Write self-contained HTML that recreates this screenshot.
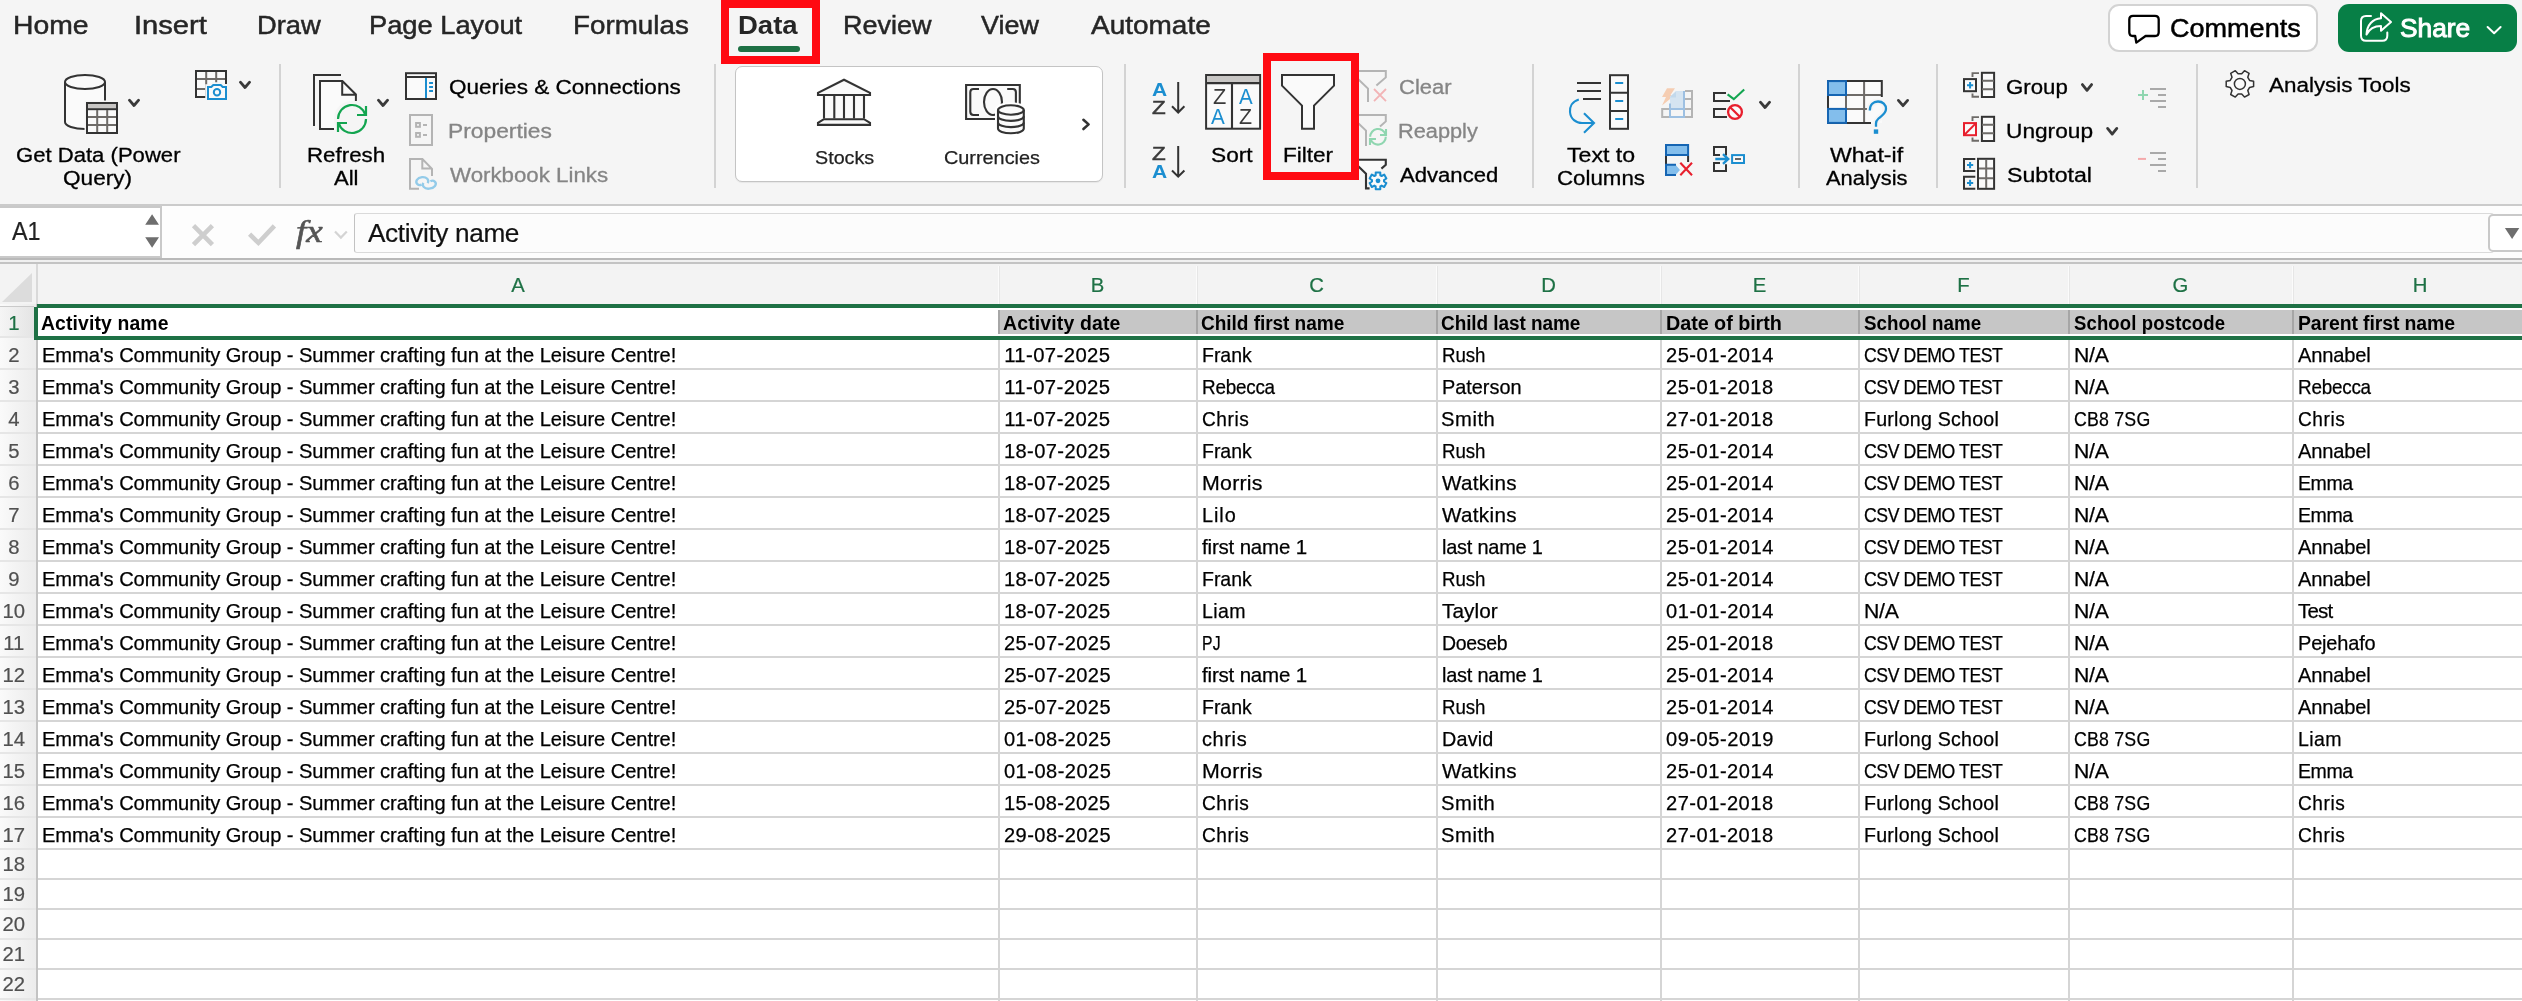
<!DOCTYPE html>
<html lang="en"><head><meta charset="utf-8"><title>Excel - Data tab Filter</title>
<style>
html,body{margin:0;padding:0}
body{width:2522px;height:1001px;position:relative;overflow:hidden;background:#fff;font-family:"Liberation Sans",sans-serif;color:#000}
.t{position:absolute;white-space:pre;margin:0;padding:0;transform-origin:0 0}
.abs{position:absolute}
#ribbon{position:absolute;left:0;top:0;width:2522px;height:204px;background:#f5f5f5}
.sep{position:absolute;top:64px;height:124px;width:2px;background:#d3d3d3}
.redbox{position:absolute;box-sizing:border-box;border:8px solid #ff0a12}
#gallery{position:absolute;left:735px;top:66px;width:368px;height:116px;box-sizing:border-box;border:1.5px solid #c4c4c4;border-radius:7px;background:#fff;box-shadow:0 1px 1px rgba(0,0,0,0.06)}
#comments{position:absolute;left:2108px;top:4px;width:210px;height:47.5px;box-sizing:border-box;border:2px solid #d3d3d3;border-radius:11px;background:#fff}
#share{position:absolute;left:2338px;top:4px;width:178.5px;height:48px;border-radius:11px;background:#077f46}
#fbar{position:absolute;left:0;top:204px;width:2522px;height:60px;background:#fdfdfd}
#grid{position:absolute;left:0;top:264px;width:2522px;height:737px;background:#fff}
.hl{position:absolute;left:38px;width:2484px;height:2px;background:#d5d5d5}
.vl{position:absolute;top:340px;width:2px;height:661px;background:#d5d5d5}
#app{position:absolute;left:0;top:0;width:2522px;height:1001px;overflow:hidden;will-change:transform}
</style></head><body><div id="app">
<div id="ribbon">
<div class="sep" style="left:278.6px"></div>
<div class="sep" style="left:714.4px"></div>
<div class="sep" style="left:1124.2px"></div>
<div class="sep" style="left:1531.8px"></div>
<div class="sep" style="left:1798.3px"></div>
<div class="sep" style="left:1935.8px"></div>
<div class="sep" style="left:2196.0px"></div>
<div id="gallery"></div><div id="comments"></div><div id="share"></div>
<div class="abs" style="left:738.2px;top:46px;width:62px;height:6px;border-radius:3px;background:#1e7145"></div>
<svg class="abs" style="left:0;top:0" width="2522" height="204" viewBox="0 0 2522 204"><path d="M65 82 A20 7 0 0 1 105 82 V122 A20 7 0 0 1 65 122 Z" fill="#fafafa"/>
<g fill="none" stroke="#333333" stroke-width="2"><ellipse cx="85" cy="82" rx="20" ry="7"/><path d="M65 82 V122 A20 7 0 0 0 85 129"/><path d="M105 82 V101"/></g>
<rect x="84.5" y="100.5" width="35" height="35" fill="#f5f5f5"/>
<rect x="87" y="103" width="30" height="30" fill="#fafafa" stroke="#333333" stroke-width="2"/>
<rect x="88" y="104" width="28" height="4.3" fill="#c8c6c4"/>
<path d="M87 109.2 H117" stroke="#333333" stroke-width="2"/>
<path d="M97.2 110 V132 M107.2 110 V132 M88 117.1 H116 M88 125 H116" stroke="#6e6b68" stroke-width="2" fill="none"/>
<path d="M129.4 100.2 L134.0 105.5 L138.6 100.2" fill="none" stroke="#3a3a3a" stroke-width="2.8" stroke-linecap="round" stroke-linejoin="round"/>
<rect x="196" y="71" width="30" height="26" fill="#fafafa"/>
<path d="M206.2 72 V96 M216.2 72 V84 M197 79 H225 M197 89 H206" stroke="#6e6b68" stroke-width="2" fill="none"/>
<path d="M226 84 V71 H196 V97 H206" stroke="#333333" stroke-width="2" fill="none"/>
<path d="M208 87 H211.3 L213.3 85 H220.7 L222.7 87 H226 V99 H208 Z" fill="#f5f5f5" stroke="#f5f5f5" stroke-width="5.5"/>
<path d="M208 87 H211.3 L213.3 85 H220.7 L222.7 87 H226 V99 H208 Z" fill="#fafafa" stroke="#1b8ed0" stroke-width="2"/>
<circle cx="217" cy="92.2" r="3.2" fill="none" stroke="#1b8ed0" stroke-width="2"/>
<path d="M240.4 82.2 L245.0 87.5 L249.6 82.2" fill="none" stroke="#3a3a3a" stroke-width="2.8" stroke-linecap="round" stroke-linejoin="round"/>
<path d="M341 75 H314 V126" stroke="#333333" stroke-width="2" fill="none"/>
<path d="M320 81 H342.5 L356 94.5 V129 H320 Z" fill="#fafafa"/>
<path d="M334 129 H320 V81 H342.4 L355.9 94.5 V101 M342.2 81 V94.8 H356" stroke="#333333" stroke-width="2" fill="none"/>
<circle cx="352" cy="119" r="18" fill="#f5f5f5"/>
<g fill="none" stroke="#13a550" stroke-width="2.2"><path d="M338 119 A14 14 0 0 1 365.39 114.91"/><path d="M357 115 H366 V106"/><path d="M366 119 A14 14 0 0 1 338.61 123.09"/><path d="M347 123 H338 V132"/></g>
<path d="M378.4 100.2 L383.0 105.5 L387.6 100.2" fill="none" stroke="#3a3a3a" stroke-width="2.8" stroke-linecap="round" stroke-linejoin="round"/>
<rect x="406" y="73.2" width="30" height="25.8" fill="#fafafa" stroke="#333333" stroke-width="2"/>
<path d="M406 77 H436" stroke="#333333" stroke-width="2"/>
<path d="M426 78 V98 M429.1 83 H433 M429.1 87 H433 M429.1 91 H433" stroke="#1b8ed0" stroke-width="2" fill="none"/>
<g fill="none" stroke="#b4b4b4" stroke-width="2"><rect x="410" y="115" width="22" height="30"/><rect x="416.1" y="123" width="3.8" height="3.8"/><rect x="416.1" y="133" width="3.8" height="3.8"/><path d="M423 125 H427 M423 134.9 H427"/></g>
<path d="M419 188.8 H410 V159.1 H422.4 L432 168.8 V176 M422.3 159.1 V168.6 H432" fill="none" stroke="#b4b4b4" stroke-width="2"/>
<g fill="none" stroke="#93cbe9" stroke-width="2.3"><path d="M427.6 183.2 C429.6 180.2 426.6 176.6 422 177.1 C417.2 177.6 414.8 181.6 417.4 184.2 C418.6 185.3 420.4 185.2 421.6 184.6"/><path d="M423.4 182.8 C421.6 185.8 424.4 189.2 429.2 188.7 C434.6 188.2 437.4 184.2 434.8 181.6 C433.6 180.5 431.6 180.6 430.4 181.2"/></g>
<rect x="824" y="95" width="40" height="24" fill="#fafafa"/>
<g fill="#fafafa" stroke="#333333" stroke-width="2.1"><path d="M818 95 V92.8 L844 79.7 L870 92.8 V95 Z"/><path d="M824 119.2 L818 122.8 V124.9 H870 V122.8 L864 119.2 Z"/></g>
<path d="M824 96 V118.5 M834.3 96 V118.5 M844 96 V118.5 M854 96 V118.5 M864 96 V118.5" stroke="#333333" stroke-width="2.1" fill="none"/>
<rect x="966.1" y="85" width="53.7" height="34" fill="#fafafa"/>
<g fill="none" stroke="#333333" stroke-width="2.1"><path d="M1019.8 104 V85 H966.1 V119 H996"/><path d="M979 89 H973.5 Q970.3 89 970.3 92.2 V111.8 Q970.3 115 973.5 115 H979"/><path d="M1007.2 89 H1012.7 Q1015.9 89 1015.9 92.2 V103"/><ellipse cx="993" cy="102" rx="9" ry="13"/></g>
<path d="M998 110 A12.9 4.7 0 0 1 1023.8 110 V128.6 A12.9 4.7 0 0 1 998 128.6 Z" fill="#fff" stroke="#fff" stroke-width="6"/>
<path d="M998 110 A12.9 4.7 0 0 1 1023.8 110 V128.6 A12.9 4.7 0 0 1 998 128.6 Z" fill="#fafafa" stroke="#333333" stroke-width="2.1"/>
<g fill="none" stroke="#333333" stroke-width="2.1"><path d="M998 110 A12.9 4.7 0 0 0 1023.8 110"/><path d="M998 116.2 A12.9 4.7 0 0 0 1023.8 116.2"/><path d="M998 122.4 A12.9 4.7 0 0 0 1023.8 122.4"/></g>
<path d="M1083.4 119.8 L1088.6 124.4 L1083.4 129" fill="none" stroke="#333333" stroke-width="2.6" stroke-linecap="round" stroke-linejoin="round"/>
<path d="M1178.2 82 V112.3 M1172 106.3 L1178.2 112.5 L1184.4 106.3" fill="none" stroke="#333333" stroke-width="2"/>
<path d="M1178.2 146 V176.5 M1172 170.5 L1178.2 176.7 L1184.4 170.5" fill="none" stroke="#333333" stroke-width="2"/>
<rect x="1206.1" y="75" width="54" height="53.7" fill="#fafafa" stroke="#333333" stroke-width="2"/>
<rect x="1207.1" y="76" width="52" height="6.2" fill="#c8c6c4"/>
<path d="M1206 83.1 H1260 M1232 84 V128.5" stroke="#333333" stroke-width="2.1" fill="none"/>
<path d="M1282 75 H1334 V85.6 L1314 105.6 V128.7 H1302 V105.6 L1282 85.6 Z" fill="#fafafa" stroke="#333333" stroke-width="2"/>
<g fill="none" stroke="#b4b4b4" stroke-width="2"><path d="M1356 71 H1385.8 V77.4 L1376.4 85.6"/><path d="M1358 79 L1368 88.6 V102"/></g>
<path d="M1374 89 L1386 101.2 M1386 89 L1374 101.2" stroke="#f2b4b6" stroke-width="1.8" fill="none"/>
<g fill="none" stroke="#b4b4b4" stroke-width="2"><path d="M1356 115 H1385.8 V121.4 L1380 126.5"/><path d="M1358 123 L1366 130.6 V146"/></g>
<g fill="none" stroke="#8fd6b0" stroke-width="2.1"><path d="M1370.2 136.8 A7.8 7.8 0 0 1 1385.46 134.52"/><path d="M1380 135 H1386 V129"/><path d="M1385.8 136.8 A7.8 7.8 0 0 1 1370.54 139.08"/><path d="M1376 139 H1370 V145"/></g>
<path d="M1356 159.7 H1385.8 V165 L1376 173 L1366 173.6 L1357 165.5 Z" fill="#fafafa"/>
<g fill="none" stroke="#333333" stroke-width="2.1"><path d="M1356 159.7 H1385.8 V164.8 L1381.4 168.6"/><path d="M1357.5 165.6 L1366 173.8 V188.4 H1369.6"/></g>
<circle cx="1378" cy="180.8" r="10.5" fill="#f5f5f5"/>
<polygon points="1375.7,172.4 1380.3,172.4 1380.3,175.3 1381.6,176.0 1384.2,174.6 1386.4,178.5 1384.0,180.1 1384.0,181.5 1386.4,183.1 1384.2,187.0 1381.6,185.6 1380.3,186.3 1380.3,189.2 1375.7,189.2 1375.7,186.3 1374.4,185.6 1371.8,187.0 1369.6,183.1 1372.0,181.5 1372.0,180.1 1369.6,178.5 1371.8,174.6 1374.4,176.0 1375.7,175.3" fill="#fafafa" stroke="#1b8ed0" stroke-width="2" stroke-linejoin="round"/>
<circle cx="1378" cy="180.8" r="2.4" fill="#1b8ed0"/>
<path d="M1577 83 H1601 M1577 91 H1601 M1583 99 H1601" stroke="#333333" stroke-width="2" fill="none"/>
<path d="M1578.8 99.4 C1572 101.5 1569.6 107 1570 112 C1570.6 119 1576 123 1582 123 H1593.5 M1584 113.2 L1594 123 L1584 132.8" fill="none" stroke="#1b8ed0" stroke-width="2.1"/>
<rect x="1610" y="75.2" width="18" height="53.6" fill="#fafafa" stroke="#333333" stroke-width="2"/>
<path d="M1610 92.8 H1628 M1610 111 H1628" stroke="#333333" stroke-width="2"/>
<path d="M1615.2 83 H1623.2 M1615.2 101 H1623.2 M1615.2 119 H1623.2" stroke="#1b8ed0" stroke-width="2"/>
<path d="M1667 88.3 H1675 L1670.5 95 H1675 L1662 105.5 L1666 97 H1662 Z" fill="#f5cdb2"/>
<path d="M1684 91 H1676 L1670 96.5 L1670 109 H1684 Z" fill="#d5e4f1"/>
<path d="M1676 97.5 V91.5 L1669.5 97.5 Z" fill="#c3d9ec"/>
<g fill="none" stroke="#b4b4b4" stroke-width="2"><path d="M1685 91 H1692 V117 H1685 M1669 117 H1662.2 V109 H1669 M1685 99 H1692 M1685 109 H1692"/></g>
<g fill="none" stroke="#9dc0e2" stroke-width="2"><path d="M1670 103.5 V117 M1684 91 V117 M1669 117 H1685 M1669 109 H1685"/></g>
<g fill="none" stroke="#333333" stroke-width="2"><path d="M1726 93 H1714 V101 H1730"/><path d="M1726 109 H1714 V117 H1727"/></g>
<path d="M1727.6 94.4 L1733.8 99.2 L1744.2 89.4" fill="none" stroke="#13a550" stroke-width="2.1"/>
<circle cx="1735" cy="112" r="9" fill="#f5f5f5"/>
<circle cx="1735" cy="112" r="6.9" fill="#fafafa" stroke="#e81f2d" stroke-width="2.3"/><path d="M1730.2 107.2 L1739.8 116.8" stroke="#e81f2d" stroke-width="2.3"/>
<path d="M1760.4 102.2 L1765.0 107.5 L1769.6 102.2" fill="none" stroke="#3a3a3a" stroke-width="2.8" stroke-linecap="round" stroke-linejoin="round"/>
<rect x="1666" y="145" width="22.1" height="10" fill="#83beec" stroke="#1565b3" stroke-width="2"/>
<path d="M1666 156 V164 M1688.1 156 V162" stroke="#333333" stroke-width="2"/>
<path d="M1666 164.8 H1675.5 L1680 170 L1675.5 175 H1666 Z" fill="#83beec"/>
<path d="M1676 164.8 H1666 V175 H1676" fill="none" stroke="#1565b3" stroke-width="2"/>
<path d="M1680.3 162.8 L1692 175.2 M1692 162.8 L1680.3 175.2" stroke="#e81f2d" stroke-width="2.1" fill="none"/>
<g fill="none" stroke="#333333" stroke-width="2"><path d="M1720 155 H1714 V147 H1726 V155.5"/><path d="M1720 163 H1714 V171 H1726 V164.2"/></g>
<path d="M1715.3 159 H1727.5 M1723 154.2 L1728.2 159 L1723 163.8" fill="none" stroke="#1b8ed0" stroke-width="2.4"/>
<rect x="1732.1" y="155.1" width="11.9" height="7.9" fill="#fafafa" stroke="#1b8ed0" stroke-width="2"/>
<path d="M1735 159 H1741" stroke="#666" stroke-width="2"/>
<rect x="1828" y="81" width="54" height="42" fill="#fafafa"/>
<path d="M1846 82 V122 M1864.1 82 V122 M1829 95 H1881 M1829 108.9 H1872" stroke="#6e6b68" stroke-width="2" fill="none"/>
<path d="M1881.8 97 V81.1 H1828 V122.9 H1871" fill="none" stroke="#333333" stroke-width="2"/>
<rect x="1828" y="81.1" width="18" height="13.9" fill="#83beec" stroke="#1565b3" stroke-width="2"/>
<rect x="1828" y="108.9" width="18" height="14" fill="#83beec" stroke="#1565b3" stroke-width="2"/>
<path d="M1869.8 110.5 C1869.8 104.5 1873.5 101.5 1878 101.5 C1882.8 101.5 1886 104.8 1886 109 C1886 113.5 1882 115.5 1878.5 118.5 C1876.6 120.2 1876 121.5 1876 123.5 V126.8" fill="none" stroke="#f5f5f5" stroke-width="6"/>
<path d="M1869.8 110.5 C1869.8 104.5 1873.5 101.5 1878 101.5 C1882.8 101.5 1886 104.8 1886 109 C1886 113.5 1882 115.5 1878.5 118.5 C1876.6 120.2 1876 121.5 1876 123.5 V126.8" fill="none" stroke="#1b8ed0" stroke-width="2.3"/>
<rect x="1873.8" y="129.4" width="4.4" height="4.4" fill="#1b8ed0"/>
<path d="M1898.4 100.4 L1903.0 105.7 L1907.6 100.4" fill="none" stroke="#3a3a3a" stroke-width="2.8" stroke-linecap="round" stroke-linejoin="round"/>
<rect x="1981.9" y="72.8" width="12.2" height="24.2" fill="#fafafa" stroke="#333333" stroke-width="2"/>
<path d="M1982 80.7 H1994 M1982 89.3 H1994" stroke="#6e6b68" stroke-width="2"/>
<path d="M1972.5 77 V73.1 H1979 M1972.5 93.4 V96.8 H1979" fill="none" stroke="#6e6b68" stroke-width="1.9"/>
<rect x="1964" y="79.1" width="12" height="12.1" fill="#fafafa" stroke="#333333" stroke-width="2"/>
<path d="M1967 85.2 H1973.2 M1970.1 82 V88.4" stroke="#1b8ed0" stroke-width="2"/>
<rect x="1981.9" y="116.8" width="12.2" height="24.2" fill="#fafafa" stroke="#333333" stroke-width="2"/>
<path d="M1982 124.7 H1994 M1982 133.3 H1994" stroke="#6e6b68" stroke-width="2"/>
<path d="M1972.5 121 V117.1 H1979 M1972.5 137.4 V140.8 H1979" fill="none" stroke="#6e6b68" stroke-width="1.9"/>
<rect x="1964" y="123.1" width="12" height="12.1" fill="#fafafa" stroke="#e81f2d" stroke-width="2"/>
<path d="M1964.5 134.7 L1975.5 123.6" stroke="#e81f2d" stroke-width="2"/>
<path d="M2082.4 84.60000000000001 L2087.0 90.3 L2091.6 84.60000000000001" fill="none" stroke="#3a3a3a" stroke-width="2.8" stroke-linecap="round" stroke-linejoin="round"/>
<path d="M2107.6 128.4 L2112.2 134.1 L2116.7999999999997 128.4" fill="none" stroke="#3a3a3a" stroke-width="2.8" stroke-linecap="round" stroke-linejoin="round"/>
<rect x="1978" y="158.8" width="16.1" height="30" fill="#fafafa" stroke="#333333" stroke-width="2"/>
<path d="M1986.2 160 V188 M1979 168.6 H1993 M1979 178.2 H1993" stroke="#6e6b68" stroke-width="2" fill="none"/>
<path d="M1975.3 159 H1964 V170.9 H1975.3" fill="none" stroke="#333333" stroke-width="2"/>
<path d="M1967 165.1 H1973.2 M1970.1 161.9 V168.3" stroke="#1b8ed0" stroke-width="2"/>
<path d="M1975.3 176.8 H1964 V188.70000000000002 H1975.3" fill="none" stroke="#333333" stroke-width="2"/>
<path d="M1967 182.9 H1973.2 M1970.1 179.70000000000002 V186.10000000000002" stroke="#1b8ed0" stroke-width="2"/>
<path d="M2150 89 H2166 M2158 95 H2166 M2150 101 H2166 M2158 107 H2166" stroke="#a9a9a9" stroke-width="2"/>
<path d="M2150 152.9 H2166 M2158 158.9 H2166 M2150 164.9 H2166 M2158 170.9 H2166" stroke="#a9a9a9" stroke-width="2"/>
<path d="M2138 95 H2148 M2143 90 V100" stroke="#8fd6b0" stroke-width="2"/>
<path d="M2138 158.9 H2146" stroke="#f4a9ab" stroke-width="2"/>
<polygon points="2253.6,81.2 2253.6,86.6 2249.6,87.4 2247.8,90.5 2249.1,94.5 2244.5,97.1 2241.7,94.0 2238.1,94.0 2235.3,97.1 2230.7,94.5 2232.0,90.5 2230.2,87.4 2226.2,86.6 2226.2,81.2 2230.2,80.4 2232.0,77.3 2230.7,73.3 2235.3,70.7 2238.1,73.8 2241.7,73.8 2244.5,70.7 2249.1,73.3 2247.8,77.3 2249.6,80.4" fill="#fafafa" stroke="#333333" stroke-width="1.5" stroke-linejoin="round"/>
<circle cx="2239.9" cy="83.9" r="5.5" fill="#fafafa" stroke="#333333" stroke-width="1.5"/>
<path d="M2133 15.8 H2155 Q2158.7 15.8 2158.7 19.5 V32.3 Q2158.7 36 2155 36 H2145.6 L2136.3 42.6 L2135.2 36 H2133 Q2129.3 36 2129.3 32.3 V19.5 Q2129.3 15.8 2133 15.8 Z" fill="none" stroke="#000" stroke-width="2.3" stroke-linejoin="round"/>
<g fill="none" stroke="#fff" stroke-width="2" stroke-linejoin="round" stroke-linecap="round"><path d="M2371 16 H2366 Q2361 16 2361 21 V35.8 Q2361 40.8 2366 40.8 H2382.3 Q2387.3 40.8 2387.3 35.8 V32.5"/><path d="M2381 13.2 L2391 22 L2381 30.8 V26 C2374 26 2369.5 28.5 2366.5 34.5 C2367 25 2372.5 18.8 2381 18.2 Z"/><path d="M2487.6 27 L2494.1 33.2 L2500.6 27"/></g></svg>
<span class="t" style="left:12.68px;top:8.90px;font-size:26.7px;line-height:33px;transform:scaleX(1.0613);color:#262626;-webkit-text-stroke:0.5px #262626;">Home</span>
<span class="t" style="left:134.31px;top:8.90px;font-size:26.7px;line-height:33px;transform:scaleX(1.0919);color:#262626;-webkit-text-stroke:0.5px #262626;">Insert</span>
<span class="t" style="left:257.16px;top:8.90px;font-size:26.7px;line-height:33px;transform:scaleX(1.0236);color:#262626;-webkit-text-stroke:0.5px #262626;">Draw</span>
<span class="t" style="left:369.36px;top:8.90px;font-size:26.7px;line-height:33px;transform:scaleX(1.0221);color:#262626;-webkit-text-stroke:0.5px #262626;">Page Layout</span>
<span class="t" style="left:573.12px;top:8.90px;font-size:26.7px;line-height:33px;transform:scaleX(1.0415);color:#262626;-webkit-text-stroke:0.5px #262626;">Formulas</span>
<span class="t" style="left:737.96px;top:8.90px;font-size:26.7px;line-height:33px;transform:scaleX(1.0311);font-weight:700;color:#262626;">Data</span>
<span class="t" style="left:843.08px;top:8.90px;font-size:26.7px;line-height:33px;transform:scaleX(1.0115);color:#262626;-webkit-text-stroke:0.5px #262626;">Review</span>
<span class="t" style="left:981.48px;top:8.90px;font-size:26.7px;line-height:33px;transform:scaleX(1.0081);color:#262626;-webkit-text-stroke:0.5px #262626;">View</span>
<span class="t" style="left:1090.95px;top:8.90px;font-size:26.7px;line-height:33px;transform:scaleX(1.0483);color:#262626;-webkit-text-stroke:0.5px #262626;">Automate</span>
<span class="t" style="left:2170.23px;top:12.20px;font-size:26.7px;line-height:33px;transform:scaleX(1.0130);-webkit-text-stroke:0.5px #000;">Comments</span>
<span class="t" style="left:2400.01px;top:12.20px;font-size:26.7px;line-height:33px;transform:scaleX(0.9848);color:#fff;-webkit-text-stroke:1.0px #fff;">Share</span>
<span class="t" style="left:15.89px;top:142.60px;font-size:20px;line-height:24px;transform:scaleX(1.1043);-webkit-text-stroke:0.3px #000;">Get Data (Power</span>
<span class="t" style="left:63.33px;top:166.00px;font-size:20px;line-height:24px;transform:scaleX(1.1301);-webkit-text-stroke:0.3px #000;">Query)</span>
<span class="t" style="left:306.77px;top:142.60px;font-size:20px;line-height:24px;transform:scaleX(1.1150);-webkit-text-stroke:0.3px #000;">Refresh</span>
<span class="t" style="left:333.96px;top:166.00px;font-size:20px;line-height:24px;transform:scaleX(1.1031);-webkit-text-stroke:0.3px #000;">All</span>
<span class="t" style="left:448.53px;top:74.60px;font-size:20px;line-height:24px;transform:scaleX(1.1266);-webkit-text-stroke:0.3px #000;">Queries &amp; Connections</span>
<span class="t" style="left:448.43px;top:118.60px;font-size:20px;line-height:24px;transform:scaleX(1.1399);color:#858585;-webkit-text-stroke:0.3px #858585;">Properties</span>
<span class="t" style="left:450.20px;top:162.60px;font-size:20px;line-height:24px;transform:scaleX(1.1141);color:#858585;-webkit-text-stroke:0.3px #858585;">Workbook Links</span>
<span class="t" style="left:1210.77px;top:142.60px;font-size:20px;line-height:24px;transform:scaleX(1.1341);-webkit-text-stroke:0.3px #000;">Sort</span>
<span class="t" style="left:1282.55px;top:142.60px;font-size:20px;line-height:24px;transform:scaleX(1.1279);-webkit-text-stroke:0.3px #000;">Filter</span>
<span class="t" style="left:1398.68px;top:74.60px;font-size:20px;line-height:24px;transform:scaleX(1.1003);color:#858585;-webkit-text-stroke:0.3px #858585;">Clear</span>
<span class="t" style="left:1398.42px;top:118.60px;font-size:20px;line-height:24px;transform:scaleX(1.0879);color:#858585;-webkit-text-stroke:0.3px #858585;">Reapply</span>
<span class="t" style="left:1399.76px;top:162.60px;font-size:20px;line-height:24px;transform:scaleX(1.1047);-webkit-text-stroke:0.3px #000;">Advanced</span>
<span class="t" style="left:1566.88px;top:142.60px;font-size:20px;line-height:24px;transform:scaleX(1.1558);-webkit-text-stroke:0.3px #000;">Text to</span>
<span class="t" style="left:1556.87px;top:166.00px;font-size:20px;line-height:24px;transform:scaleX(1.1144);-webkit-text-stroke:0.3px #000;">Columns</span>
<span class="t" style="left:1829.90px;top:142.60px;font-size:20px;line-height:24px;transform:scaleX(1.1536);-webkit-text-stroke:0.3px #000;">What-if</span>
<span class="t" style="left:1826.36px;top:166.00px;font-size:20px;line-height:24px;transform:scaleX(1.0935);-webkit-text-stroke:0.3px #000;">Analysis</span>
<span class="t" style="left:2006.48px;top:74.60px;font-size:20px;line-height:24px;transform:scaleX(1.1110);-webkit-text-stroke:0.3px #000;">Group</span>
<span class="t" style="left:2005.85px;top:118.60px;font-size:20px;line-height:24px;transform:scaleX(1.1341);-webkit-text-stroke:0.3px #000;">Ungroup</span>
<span class="t" style="left:2006.55px;top:162.60px;font-size:20px;line-height:24px;transform:scaleX(1.1583);-webkit-text-stroke:0.3px #000;">Subtotal</span>
<span class="t" style="left:2268.56px;top:73.00px;font-size:20px;line-height:24px;transform:scaleX(1.1211);-webkit-text-stroke:0.3px #000;">Analysis Tools</span>
<span class="t" style="left:814.80px;top:146.30px;font-size:19px;line-height:23px;transform:scaleX(1.0384);color:#222;-webkit-text-stroke:0.25px #222;">Stocks</span>
<span class="t" style="left:944.49px;top:146.30px;font-size:19px;line-height:23px;transform:scaleX(1.0443);color:#222;-webkit-text-stroke:0.25px #222;">Currencies</span>
<span class="t" style="left:1152.38px;top:77.70px;font-size:18.5px;line-height:23px;transform:scaleX(1.1360);font-weight:700;color:#1b8ed0;">A</span>
<span class="t" style="left:1152.19px;top:95.90px;font-size:18.5px;line-height:23px;transform:scaleX(1.2137);color:#3a3a3a;-webkit-text-stroke:0.5px #3a3a3a;">Z</span>
<span class="t" style="left:1152.19px;top:141.60px;font-size:18.5px;line-height:23px;transform:scaleX(1.2137);color:#3a3a3a;-webkit-text-stroke:0.5px #3a3a3a;">Z</span>
<span class="t" style="left:1152.38px;top:159.90px;font-size:18.5px;line-height:23px;transform:scaleX(1.1360);font-weight:700;color:#1b8ed0;">A</span>
<span class="t" style="left:1212.71px;top:84.00px;font-size:21.5px;line-height:26px;transform:scaleX(1.0104);color:#3a3a3a;">Z</span>
<span class="t" style="left:1211.16px;top:103.80px;font-size:21.5px;line-height:26px;transform:scaleX(0.9609);color:#1b8ed0;">A</span>
<span class="t" style="left:1239.36px;top:84.00px;font-size:21.5px;line-height:26px;transform:scaleX(0.9539);color:#1b8ed0;">A</span>
<span class="t" style="left:1238.72px;top:103.80px;font-size:21.5px;line-height:26px;transform:scaleX(0.9934);color:#3a3a3a;">Z</span>
<div class="redbox" style="left:721px;top:-0.4px;width:99px;height:64.8px"></div>
<div class="redbox" style="left:1263px;top:53px;width:96px;height:127px"></div>
</div>
<div id="fbar"></div>
<div class="abs" style="left:0;top:204px;width:2522px;height:2px;background:#cbcbcb"></div>
<div class="abs" style="left:-2px;top:206px;width:164px;height:52px;box-sizing:border-box;background:#fff;border:2px solid #c9c9c9"></div>
<div class="abs" style="left:353.5px;top:213px;width:2140px;height:40px;box-sizing:border-box;border:1.5px solid #dadada;border-left-color:#c2c2c2;border-radius:3px;background:#fcfcfc"></div>
<div class="abs" style="left:2487.5px;top:214px;width:60px;height:38px;box-sizing:border-box;border:2px solid #c9c9c9;border-radius:5px;background:#fff"></div>
<div class="abs" style="left:0;top:258px;width:2522px;height:2px;background:#b9b9b9"></div>
<div class="abs" style="left:0;top:260px;width:2522px;height:2px;background:#f0f0f0"></div>
<div class="abs" style="left:0;top:262px;width:2522px;height:2px;background:#c3c3c3"></div>
<svg class="abs" style="left:0;top:204px" width="2522" height="60" viewBox="0 204 2522 60">
<path d="M145.2 224.8 L152.1 214.3 L159 224.8 Z M145.2 237.2 L152.1 247.7 L159 237.2 Z" fill="#6e6e6e"/>
<path d="M193.5 225.7 L212.4 244.6 M212.4 225.7 L193.5 244.6" stroke="#cecece" stroke-width="4.6" fill="none"/>
<path d="M249.6 234.2 L258.4 242.8 L274.4 225.8" stroke="#cecece" stroke-width="4.6" fill="none"/>
<path d="M335 231.6 L340.9 237.6 L346.8 231.6" stroke="#d4d4d4" stroke-width="2.2" fill="none"/>
<path d="M2504.9 228 L2519.3 228 L2512.1 239 Z" fill="#6e6e6e"/>
</svg>
<span class="t" style="left:11.95px;top:215.00px;font-size:26px;line-height:32px;transform:scaleX(0.8989);color:#222;-webkit-text-stroke:0.2px #222;">A1</span>
<span class="t" style="left:296.08px;top:213.00px;font-size:31px;line-height:38px;transform:scaleX(1.1974);color:#555;font-family:'Liberation Serif',serif;font-style:italic;-webkit-text-stroke:0.6px #555;">fx</span>
<span class="t" style="left:368.25px;top:217.00px;font-size:26px;line-height:32px;letter-spacing:-0.356px;transform:scaleX(1.0073);color:#111;-webkit-text-stroke:0.2px #111;">Activity name</span>
<div id="grid">
</div>
<div class="abs" style="left:0;top:264px;width:2522px;height:40px;background:#f3f3f3"></div>
<div class="abs" style="left:0;top:304px;width:36px;height:697px;background:linear-gradient(to right,#fafafa,#f4f4f4 40%,#ececec)"></div>
<div class="abs" style="left:0;top:307px;width:36px;height:30px;background:linear-gradient(to right,#f5f5f5,#e3e3e3)"></div>
<div class="abs" style="left:0;top:305.8px;width:34px;height:1.4px;background:#cacaca"></div>
<div class="abs" style="left:36px;top:264px;width:2px;height:40px;background:#d9d9d9"></div><div class="abs" style="left:36px;top:304px;width:2px;height:697px;background:#c3c3c3"></div>
<svg class="abs" style="left:0;top:264px" width="38" height="40" viewBox="0 0 38 40"><path d="M32 9 V38 H2 Z" fill="#dcdcdc"/></svg>
<span class="t" style="left:511.23px;top:272.90px;font-size:20.3px;line-height:25px;color:#1e7145;-webkit-text-stroke:0.2px #1e7145;">A</span>
<span class="t" style="left:1090.73px;top:272.90px;font-size:20.3px;line-height:25px;color:#1e7145;-webkit-text-stroke:0.2px #1e7145;">B</span>
<span class="t" style="left:1309.17px;top:272.90px;font-size:20.3px;line-height:25px;color:#1e7145;-webkit-text-stroke:0.2px #1e7145;">C</span>
<span class="t" style="left:1541.17px;top:272.90px;font-size:20.3px;line-height:25px;color:#1e7145;-webkit-text-stroke:0.2px #1e7145;">D</span>
<span class="t" style="left:1752.73px;top:272.90px;font-size:20.3px;line-height:25px;color:#1e7145;-webkit-text-stroke:0.2px #1e7145;">E</span>
<span class="t" style="left:1957.30px;top:272.90px;font-size:20.3px;line-height:25px;color:#1e7145;-webkit-text-stroke:0.2px #1e7145;">F</span>
<span class="t" style="left:2172.61px;top:272.90px;font-size:20.3px;line-height:25px;color:#1e7145;-webkit-text-stroke:0.2px #1e7145;">G</span>
<span class="t" style="left:2412.67px;top:272.90px;font-size:20.3px;line-height:25px;color:#1e7145;-webkit-text-stroke:0.2px #1e7145;">H</span>
<div class="abs" style="left:998px;top:266px;width:1.2px;height:38px;background:#fbfbfb"></div><div class="abs" style="left:999.2px;top:266px;width:0.8px;height:38px;background:#e6e6e6"></div>
<div class="abs" style="left:1196px;top:266px;width:1.2px;height:38px;background:#fbfbfb"></div><div class="abs" style="left:1197.2px;top:266px;width:0.8px;height:38px;background:#e6e6e6"></div>
<div class="abs" style="left:1436px;top:266px;width:1.2px;height:38px;background:#fbfbfb"></div><div class="abs" style="left:1437.2px;top:266px;width:0.8px;height:38px;background:#e6e6e6"></div>
<div class="abs" style="left:1660px;top:266px;width:1.2px;height:38px;background:#fbfbfb"></div><div class="abs" style="left:1661.2px;top:266px;width:0.8px;height:38px;background:#e6e6e6"></div>
<div class="abs" style="left:1858px;top:266px;width:1.2px;height:38px;background:#fbfbfb"></div><div class="abs" style="left:1859.2px;top:266px;width:0.8px;height:38px;background:#e6e6e6"></div>
<div class="abs" style="left:2068px;top:266px;width:1.2px;height:38px;background:#fbfbfb"></div><div class="abs" style="left:2069.2px;top:266px;width:0.8px;height:38px;background:#e6e6e6"></div>
<div class="abs" style="left:2292px;top:266px;width:1.2px;height:38px;background:#fbfbfb"></div><div class="abs" style="left:2293.2px;top:266px;width:0.8px;height:38px;background:#e6e6e6"></div>
<div class="hl" style="top:368px"></div>
<div class="hl" style="top:400px"></div>
<div class="hl" style="top:432px"></div>
<div class="hl" style="top:464px"></div>
<div class="hl" style="top:496px"></div>
<div class="hl" style="top:528px"></div>
<div class="hl" style="top:560px"></div>
<div class="hl" style="top:592px"></div>
<div class="hl" style="top:624px"></div>
<div class="hl" style="top:656px"></div>
<div class="hl" style="top:688px"></div>
<div class="hl" style="top:720px"></div>
<div class="hl" style="top:752px"></div>
<div class="hl" style="top:784px"></div>
<div class="hl" style="top:816px"></div>
<div class="hl" style="top:848px"></div>
<div class="hl" style="top:878px"></div>
<div class="hl" style="top:908px"></div>
<div class="hl" style="top:938px"></div>
<div class="hl" style="top:968px"></div>
<div class="hl" style="top:998px"></div>
<div class="vl" style="left:998px"></div>
<div class="vl" style="left:1196px"></div>
<div class="vl" style="left:1436px"></div>
<div class="vl" style="left:1660px"></div>
<div class="vl" style="left:1858px"></div>
<div class="vl" style="left:2068px"></div>
<div class="vl" style="left:2292px"></div>
<div class="abs" style="left:0;top:336px;width:36px;height:2px;background:#e6e6e6"></div>
<div class="abs" style="left:0;top:368px;width:36px;height:2px;background:#e6e6e6"></div>
<div class="abs" style="left:0;top:400px;width:36px;height:2px;background:#e6e6e6"></div>
<div class="abs" style="left:0;top:432px;width:36px;height:2px;background:#e6e6e6"></div>
<div class="abs" style="left:0;top:464px;width:36px;height:2px;background:#e6e6e6"></div>
<div class="abs" style="left:0;top:496px;width:36px;height:2px;background:#e6e6e6"></div>
<div class="abs" style="left:0;top:528px;width:36px;height:2px;background:#e6e6e6"></div>
<div class="abs" style="left:0;top:560px;width:36px;height:2px;background:#e6e6e6"></div>
<div class="abs" style="left:0;top:592px;width:36px;height:2px;background:#e6e6e6"></div>
<div class="abs" style="left:0;top:624px;width:36px;height:2px;background:#e6e6e6"></div>
<div class="abs" style="left:0;top:656px;width:36px;height:2px;background:#e6e6e6"></div>
<div class="abs" style="left:0;top:688px;width:36px;height:2px;background:#e6e6e6"></div>
<div class="abs" style="left:0;top:720px;width:36px;height:2px;background:#e6e6e6"></div>
<div class="abs" style="left:0;top:752px;width:36px;height:2px;background:#e6e6e6"></div>
<div class="abs" style="left:0;top:784px;width:36px;height:2px;background:#e6e6e6"></div>
<div class="abs" style="left:0;top:816px;width:36px;height:2px;background:#e6e6e6"></div>
<div class="abs" style="left:0;top:848px;width:36px;height:2px;background:#e6e6e6"></div>
<div class="abs" style="left:0;top:878px;width:36px;height:2px;background:#e6e6e6"></div>
<div class="abs" style="left:0;top:908px;width:36px;height:2px;background:#e6e6e6"></div>
<div class="abs" style="left:0;top:938px;width:36px;height:2px;background:#e6e6e6"></div>
<div class="abs" style="left:0;top:968px;width:36px;height:2px;background:#e6e6e6"></div>
<div class="abs" style="left:0;top:998px;width:36px;height:2px;background:#e6e6e6"></div>
<div class="abs" style="left:998px;top:310px;width:1524px;height:24px;background:#c6c6c6"></div>
<div class="abs" style="left:998px;top:310px;width:2px;height:24px;background:#a6a6a6"></div>
<div class="abs" style="left:1196px;top:310px;width:2px;height:24px;background:#a6a6a6"></div>
<div class="abs" style="left:1436px;top:310px;width:2px;height:24px;background:#a6a6a6"></div>
<div class="abs" style="left:1660px;top:310px;width:2px;height:24px;background:#a6a6a6"></div>
<div class="abs" style="left:1858px;top:310px;width:2px;height:24px;background:#a6a6a6"></div>
<div class="abs" style="left:2068px;top:310px;width:2px;height:24px;background:#a6a6a6"></div>
<div class="abs" style="left:2292px;top:310px;width:2px;height:24px;background:#a6a6a6"></div>
<div class="abs" style="left:37px;top:304px;width:2490px;height:4px;background:#1e7145"></div><div class="abs" style="left:34px;top:307.2px;width:4px;height:32.8px;background:#1e7145"></div><div class="abs" style="left:34px;top:336px;width:2490px;height:4px;background:#1e7145"></div>
<span class="t" style="left:8.16px;top:310.50px;font-size:20.3px;line-height:25px;color:#1e7145;-webkit-text-stroke:0.2px #1e7145;">1</span>
<span class="t" style="left:8.16px;top:342.50px;font-size:20.3px;line-height:25px;color:#505050;-webkit-text-stroke:0.2px #505050;">2</span>
<span class="t" style="left:8.16px;top:374.50px;font-size:20.3px;line-height:25px;color:#505050;-webkit-text-stroke:0.2px #505050;">3</span>
<span class="t" style="left:8.16px;top:406.50px;font-size:20.3px;line-height:25px;color:#505050;-webkit-text-stroke:0.2px #505050;">4</span>
<span class="t" style="left:8.16px;top:438.50px;font-size:20.3px;line-height:25px;color:#505050;-webkit-text-stroke:0.2px #505050;">5</span>
<span class="t" style="left:8.16px;top:470.50px;font-size:20.3px;line-height:25px;color:#505050;-webkit-text-stroke:0.2px #505050;">6</span>
<span class="t" style="left:8.16px;top:502.50px;font-size:20.3px;line-height:25px;color:#505050;-webkit-text-stroke:0.2px #505050;">7</span>
<span class="t" style="left:8.16px;top:534.50px;font-size:20.3px;line-height:25px;color:#505050;-webkit-text-stroke:0.2px #505050;">8</span>
<span class="t" style="left:8.16px;top:566.50px;font-size:20.3px;line-height:25px;color:#505050;-webkit-text-stroke:0.2px #505050;">9</span>
<span class="t" style="left:2.51px;top:598.50px;font-size:20.3px;line-height:25px;color:#505050;-webkit-text-stroke:0.2px #505050;">10</span>
<span class="t" style="left:3.26px;top:630.50px;font-size:20.3px;line-height:25px;color:#505050;-webkit-text-stroke:0.2px #505050;">11</span>
<span class="t" style="left:2.51px;top:662.50px;font-size:20.3px;line-height:25px;color:#505050;-webkit-text-stroke:0.2px #505050;">12</span>
<span class="t" style="left:2.51px;top:694.50px;font-size:20.3px;line-height:25px;color:#505050;-webkit-text-stroke:0.2px #505050;">13</span>
<span class="t" style="left:2.51px;top:726.50px;font-size:20.3px;line-height:25px;color:#505050;-webkit-text-stroke:0.2px #505050;">14</span>
<span class="t" style="left:2.51px;top:758.50px;font-size:20.3px;line-height:25px;color:#505050;-webkit-text-stroke:0.2px #505050;">15</span>
<span class="t" style="left:2.51px;top:790.50px;font-size:20.3px;line-height:25px;color:#505050;-webkit-text-stroke:0.2px #505050;">16</span>
<span class="t" style="left:2.51px;top:822.50px;font-size:20.3px;line-height:25px;color:#505050;-webkit-text-stroke:0.2px #505050;">17</span>
<span class="t" style="left:2.51px;top:851.50px;font-size:20.3px;line-height:25px;color:#505050;-webkit-text-stroke:0.2px #505050;">18</span>
<span class="t" style="left:2.51px;top:881.50px;font-size:20.3px;line-height:25px;color:#505050;-webkit-text-stroke:0.2px #505050;">19</span>
<span class="t" style="left:2.51px;top:911.50px;font-size:20.3px;line-height:25px;color:#505050;-webkit-text-stroke:0.2px #505050;">20</span>
<span class="t" style="left:2.51px;top:941.50px;font-size:20.3px;line-height:25px;color:#505050;-webkit-text-stroke:0.2px #505050;">21</span>
<span class="t" style="left:2.51px;top:971.50px;font-size:20.3px;line-height:25px;color:#505050;-webkit-text-stroke:0.2px #505050;">22</span>
<span class="t" style="left:41.36px;top:310.50px;font-size:20.3px;line-height:25px;letter-spacing:0.129px;transform:scaleX(0.9549);font-weight:700;">Activity name</span>
<span class="t" style="left:1003.36px;top:310.50px;font-size:20.3px;line-height:25px;letter-spacing:0.152px;transform:scaleX(0.9591);font-weight:700;">Activity date</span>
<span class="t" style="left:1201.47px;top:310.50px;font-size:20.3px;line-height:25px;letter-spacing:-0.060px;transform:scaleX(0.9403);font-weight:700;">Child first name</span>
<span class="t" style="left:1441.47px;top:310.50px;font-size:20.3px;line-height:25px;letter-spacing:-0.071px;transform:scaleX(0.9353);font-weight:700;">Child last name</span>
<span class="t" style="left:1665.72px;top:310.50px;font-size:20.3px;line-height:25px;letter-spacing:-0.056px;transform:scaleX(0.9757);font-weight:700;">Date of birth</span>
<span class="t" style="left:1863.67px;top:310.50px;font-size:20.3px;line-height:25px;letter-spacing:0.012px;transform:scaleX(0.9268);font-weight:700;">School name</span>
<span class="t" style="left:2073.67px;top:310.50px;font-size:20.3px;line-height:25px;letter-spacing:0.139px;transform:scaleX(0.9136);font-weight:700;">School postcode</span>
<span class="t" style="left:2297.73px;top:310.50px;font-size:20.3px;line-height:25px;letter-spacing:-0.126px;transform:scaleX(0.9592);font-weight:700;">Parent first name</span>
<span class="t" style="left:41.71px;top:342.50px;font-size:20.3px;line-height:25px;letter-spacing:-0.073px;transform:scaleX(0.9922);-webkit-text-stroke:0.25px #000;">Emma's Community Group - Summer crafting fun at the Leisure Centre!</span>
<span class="t" style="left:1004.15px;top:342.50px;font-size:20.3px;line-height:25px;letter-spacing:0.408px;-webkit-text-stroke:0.25px #000;">11-07-2025</span>
<span class="t" style="left:1201.68px;top:342.50px;font-size:20.3px;line-height:25px;letter-spacing:-0.014px;transform:scaleX(0.9613);-webkit-text-stroke:0.25px #000;">Frank</span>
<span class="t" style="left:1441.84px;top:342.50px;font-size:20.3px;line-height:25px;letter-spacing:-0.102px;transform:scaleX(0.9215);-webkit-text-stroke:0.25px #000;">Rush</span>
<span class="t" style="left:1665.78px;top:342.50px;font-size:20.3px;line-height:25px;letter-spacing:0.530px;transform:scaleX(0.9889);-webkit-text-stroke:0.25px #000;">25-01-2014</span>
<span class="t" style="left:1863.62px;top:342.50px;font-size:20.3px;line-height:25px;letter-spacing:-0.494px;transform:scaleX(0.8717);-webkit-text-stroke:0.25px #000;">CSV DEMO TEST</span>
<span class="t" style="left:2073.65px;top:342.50px;font-size:20.3px;line-height:25px;letter-spacing:-0.276px;transform:scaleX(1.0469);-webkit-text-stroke:0.25px #000;">N/A</span>
<span class="t" style="left:2297.85px;top:342.50px;font-size:20.3px;line-height:25px;letter-spacing:-0.196px;transform:scaleX(0.9925);-webkit-text-stroke:0.25px #000;">Annabel</span>
<span class="t" style="left:41.71px;top:374.50px;font-size:20.3px;line-height:25px;letter-spacing:-0.073px;transform:scaleX(0.9922);-webkit-text-stroke:0.25px #000;">Emma's Community Group - Summer crafting fun at the Leisure Centre!</span>
<span class="t" style="left:1004.15px;top:374.50px;font-size:20.3px;line-height:25px;letter-spacing:0.408px;-webkit-text-stroke:0.25px #000;">11-07-2025</span>
<span class="t" style="left:1201.83px;top:374.50px;font-size:20.3px;line-height:25px;letter-spacing:-0.248px;transform:scaleX(0.9304);-webkit-text-stroke:0.25px #000;">Rebecca</span>
<span class="t" style="left:1441.75px;top:374.50px;font-size:20.3px;line-height:25px;letter-spacing:-0.013px;transform:scaleX(0.9804);-webkit-text-stroke:0.25px #000;">Paterson</span>
<span class="t" style="left:1665.78px;top:374.50px;font-size:20.3px;line-height:25px;letter-spacing:0.504px;transform:scaleX(0.9889);-webkit-text-stroke:0.25px #000;">25-01-2018</span>
<span class="t" style="left:1863.62px;top:374.50px;font-size:20.3px;line-height:25px;letter-spacing:-0.494px;transform:scaleX(0.8717);-webkit-text-stroke:0.25px #000;">CSV DEMO TEST</span>
<span class="t" style="left:2073.65px;top:374.50px;font-size:20.3px;line-height:25px;letter-spacing:-0.276px;transform:scaleX(1.0469);-webkit-text-stroke:0.25px #000;">N/A</span>
<span class="t" style="left:2297.83px;top:374.50px;font-size:20.3px;line-height:25px;letter-spacing:-0.248px;transform:scaleX(0.9304);-webkit-text-stroke:0.25px #000;">Rebecca</span>
<span class="t" style="left:41.71px;top:406.50px;font-size:20.3px;line-height:25px;letter-spacing:-0.073px;transform:scaleX(0.9922);-webkit-text-stroke:0.25px #000;">Emma's Community Group - Summer crafting fun at the Leisure Centre!</span>
<span class="t" style="left:1004.15px;top:406.50px;font-size:20.3px;line-height:25px;letter-spacing:0.408px;-webkit-text-stroke:0.25px #000;">11-07-2025</span>
<span class="t" style="left:1201.55px;top:406.50px;font-size:20.3px;line-height:25px;letter-spacing:0.582px;transform:scaleX(0.9418);-webkit-text-stroke:0.25px #000;">Chris</span>
<span class="t" style="left:1441.47px;top:406.50px;font-size:20.3px;line-height:25px;letter-spacing:0.551px;transform:scaleX(0.9956);-webkit-text-stroke:0.25px #000;">Smith</span>
<span class="t" style="left:1665.78px;top:406.50px;font-size:20.3px;line-height:25px;letter-spacing:0.504px;transform:scaleX(0.9889);-webkit-text-stroke:0.25px #000;">27-01-2018</span>
<span class="t" style="left:1863.67px;top:406.50px;font-size:20.3px;line-height:25px;letter-spacing:0.224px;transform:scaleX(0.9675);-webkit-text-stroke:0.25px #000;">Furlong School</span>
<span class="t" style="left:2073.62px;top:406.50px;font-size:20.3px;line-height:25px;letter-spacing:0.244px;transform:scaleX(0.8742);-webkit-text-stroke:0.25px #000;">CB8 7SG</span>
<span class="t" style="left:2297.55px;top:406.50px;font-size:20.3px;line-height:25px;letter-spacing:0.582px;transform:scaleX(0.9418);-webkit-text-stroke:0.25px #000;">Chris</span>
<span class="t" style="left:41.71px;top:438.50px;font-size:20.3px;line-height:25px;letter-spacing:-0.073px;transform:scaleX(0.9922);-webkit-text-stroke:0.25px #000;">Emma's Community Group - Summer crafting fun at the Leisure Centre!</span>
<span class="t" style="left:1004.17px;top:438.50px;font-size:20.3px;line-height:25px;letter-spacing:0.410px;transform:scaleX(0.9889);-webkit-text-stroke:0.25px #000;">18-07-2025</span>
<span class="t" style="left:1201.68px;top:438.50px;font-size:20.3px;line-height:25px;letter-spacing:-0.014px;transform:scaleX(0.9613);-webkit-text-stroke:0.25px #000;">Frank</span>
<span class="t" style="left:1441.84px;top:438.50px;font-size:20.3px;line-height:25px;letter-spacing:-0.102px;transform:scaleX(0.9215);-webkit-text-stroke:0.25px #000;">Rush</span>
<span class="t" style="left:1665.78px;top:438.50px;font-size:20.3px;line-height:25px;letter-spacing:0.530px;transform:scaleX(0.9889);-webkit-text-stroke:0.25px #000;">25-01-2014</span>
<span class="t" style="left:1863.62px;top:438.50px;font-size:20.3px;line-height:25px;letter-spacing:-0.494px;transform:scaleX(0.8717);-webkit-text-stroke:0.25px #000;">CSV DEMO TEST</span>
<span class="t" style="left:2073.65px;top:438.50px;font-size:20.3px;line-height:25px;letter-spacing:-0.276px;transform:scaleX(1.0469);-webkit-text-stroke:0.25px #000;">N/A</span>
<span class="t" style="left:2297.85px;top:438.50px;font-size:20.3px;line-height:25px;letter-spacing:-0.196px;transform:scaleX(0.9925);-webkit-text-stroke:0.25px #000;">Annabel</span>
<span class="t" style="left:41.71px;top:470.50px;font-size:20.3px;line-height:25px;letter-spacing:-0.073px;transform:scaleX(0.9922);-webkit-text-stroke:0.25px #000;">Emma's Community Group - Summer crafting fun at the Leisure Centre!</span>
<span class="t" style="left:1004.17px;top:470.50px;font-size:20.3px;line-height:25px;letter-spacing:0.410px;transform:scaleX(0.9889);-webkit-text-stroke:0.25px #000;">18-07-2025</span>
<span class="t" style="left:1201.84px;top:470.50px;font-size:20.3px;line-height:25px;letter-spacing:0.226px;transform:scaleX(1.0537);-webkit-text-stroke:0.25px #000;">Morris</span>
<span class="t" style="left:1441.84px;top:470.50px;font-size:20.3px;line-height:25px;letter-spacing:0.308px;transform:scaleX(1.0176);-webkit-text-stroke:0.25px #000;">Watkins</span>
<span class="t" style="left:1665.78px;top:470.50px;font-size:20.3px;line-height:25px;letter-spacing:0.530px;transform:scaleX(0.9889);-webkit-text-stroke:0.25px #000;">25-01-2014</span>
<span class="t" style="left:1863.62px;top:470.50px;font-size:20.3px;line-height:25px;letter-spacing:-0.494px;transform:scaleX(0.8717);-webkit-text-stroke:0.25px #000;">CSV DEMO TEST</span>
<span class="t" style="left:2073.65px;top:470.50px;font-size:20.3px;line-height:25px;letter-spacing:-0.276px;transform:scaleX(1.0469);-webkit-text-stroke:0.25px #000;">N/A</span>
<span class="t" style="left:2297.76px;top:470.50px;font-size:20.3px;line-height:25px;letter-spacing:-0.416px;transform:scaleX(0.9622);-webkit-text-stroke:0.25px #000;">Emma</span>
<span class="t" style="left:41.71px;top:502.50px;font-size:20.3px;line-height:25px;letter-spacing:-0.073px;transform:scaleX(0.9922);-webkit-text-stroke:0.25px #000;">Emma's Community Group - Summer crafting fun at the Leisure Centre!</span>
<span class="t" style="left:1004.17px;top:502.50px;font-size:20.3px;line-height:25px;letter-spacing:0.410px;transform:scaleX(0.9889);-webkit-text-stroke:0.25px #000;">18-07-2025</span>
<span class="t" style="left:1201.65px;top:502.50px;font-size:20.3px;line-height:25px;letter-spacing:0.964px;transform:scaleX(0.9794);-webkit-text-stroke:0.25px #000;">Lilo</span>
<span class="t" style="left:1441.84px;top:502.50px;font-size:20.3px;line-height:25px;letter-spacing:0.308px;transform:scaleX(1.0176);-webkit-text-stroke:0.25px #000;">Watkins</span>
<span class="t" style="left:1665.78px;top:502.50px;font-size:20.3px;line-height:25px;letter-spacing:0.530px;transform:scaleX(0.9889);-webkit-text-stroke:0.25px #000;">25-01-2014</span>
<span class="t" style="left:1863.62px;top:502.50px;font-size:20.3px;line-height:25px;letter-spacing:-0.494px;transform:scaleX(0.8717);-webkit-text-stroke:0.25px #000;">CSV DEMO TEST</span>
<span class="t" style="left:2073.65px;top:502.50px;font-size:20.3px;line-height:25px;letter-spacing:-0.276px;transform:scaleX(1.0469);-webkit-text-stroke:0.25px #000;">N/A</span>
<span class="t" style="left:2297.76px;top:502.50px;font-size:20.3px;line-height:25px;letter-spacing:-0.416px;transform:scaleX(0.9622);-webkit-text-stroke:0.25px #000;">Emma</span>
<span class="t" style="left:41.71px;top:534.50px;font-size:20.3px;line-height:25px;letter-spacing:-0.073px;transform:scaleX(0.9922);-webkit-text-stroke:0.25px #000;">Emma's Community Group - Summer crafting fun at the Leisure Centre!</span>
<span class="t" style="left:1004.17px;top:534.50px;font-size:20.3px;line-height:25px;letter-spacing:0.410px;transform:scaleX(0.9889);-webkit-text-stroke:0.25px #000;">18-07-2025</span>
<span class="t" style="left:1201.77px;top:534.50px;font-size:20.3px;line-height:25px;letter-spacing:-0.173px;transform:scaleX(1.0102);-webkit-text-stroke:0.25px #000;">first name 1</span>
<span class="t" style="left:1442.03px;top:534.50px;font-size:20.3px;line-height:25px;letter-spacing:-0.241px;transform:scaleX(0.9842);-webkit-text-stroke:0.25px #000;">last name 1</span>
<span class="t" style="left:1665.78px;top:534.50px;font-size:20.3px;line-height:25px;letter-spacing:0.530px;transform:scaleX(0.9889);-webkit-text-stroke:0.25px #000;">25-01-2014</span>
<span class="t" style="left:1863.62px;top:534.50px;font-size:20.3px;line-height:25px;letter-spacing:-0.494px;transform:scaleX(0.8717);-webkit-text-stroke:0.25px #000;">CSV DEMO TEST</span>
<span class="t" style="left:2073.65px;top:534.50px;font-size:20.3px;line-height:25px;letter-spacing:-0.276px;transform:scaleX(1.0469);-webkit-text-stroke:0.25px #000;">N/A</span>
<span class="t" style="left:2297.85px;top:534.50px;font-size:20.3px;line-height:25px;letter-spacing:-0.196px;transform:scaleX(0.9925);-webkit-text-stroke:0.25px #000;">Annabel</span>
<span class="t" style="left:41.71px;top:566.50px;font-size:20.3px;line-height:25px;letter-spacing:-0.073px;transform:scaleX(0.9922);-webkit-text-stroke:0.25px #000;">Emma's Community Group - Summer crafting fun at the Leisure Centre!</span>
<span class="t" style="left:1004.17px;top:566.50px;font-size:20.3px;line-height:25px;letter-spacing:0.410px;transform:scaleX(0.9889);-webkit-text-stroke:0.25px #000;">18-07-2025</span>
<span class="t" style="left:1201.68px;top:566.50px;font-size:20.3px;line-height:25px;letter-spacing:-0.014px;transform:scaleX(0.9613);-webkit-text-stroke:0.25px #000;">Frank</span>
<span class="t" style="left:1441.84px;top:566.50px;font-size:20.3px;line-height:25px;letter-spacing:-0.102px;transform:scaleX(0.9215);-webkit-text-stroke:0.25px #000;">Rush</span>
<span class="t" style="left:1665.78px;top:566.50px;font-size:20.3px;line-height:25px;letter-spacing:0.530px;transform:scaleX(0.9889);-webkit-text-stroke:0.25px #000;">25-01-2014</span>
<span class="t" style="left:1863.62px;top:566.50px;font-size:20.3px;line-height:25px;letter-spacing:-0.494px;transform:scaleX(0.8717);-webkit-text-stroke:0.25px #000;">CSV DEMO TEST</span>
<span class="t" style="left:2073.65px;top:566.50px;font-size:20.3px;line-height:25px;letter-spacing:-0.276px;transform:scaleX(1.0469);-webkit-text-stroke:0.25px #000;">N/A</span>
<span class="t" style="left:2297.85px;top:566.50px;font-size:20.3px;line-height:25px;letter-spacing:-0.196px;transform:scaleX(0.9925);-webkit-text-stroke:0.25px #000;">Annabel</span>
<span class="t" style="left:41.71px;top:598.50px;font-size:20.3px;line-height:25px;letter-spacing:-0.073px;transform:scaleX(0.9922);-webkit-text-stroke:0.25px #000;">Emma's Community Group - Summer crafting fun at the Leisure Centre!</span>
<span class="t" style="left:1004.17px;top:598.50px;font-size:20.3px;line-height:25px;letter-spacing:0.410px;transform:scaleX(0.9889);-webkit-text-stroke:0.25px #000;">18-07-2025</span>
<span class="t" style="left:1201.68px;top:598.50px;font-size:20.3px;line-height:25px;letter-spacing:0.404px;transform:scaleX(0.9639);-webkit-text-stroke:0.25px #000;">Liam</span>
<span class="t" style="left:1441.59px;top:598.50px;font-size:20.3px;line-height:25px;letter-spacing:0.050px;transform:scaleX(1.0257);-webkit-text-stroke:0.25px #000;">Taylor</span>
<span class="t" style="left:1665.59px;top:598.50px;font-size:20.3px;line-height:25px;letter-spacing:0.552px;transform:scaleX(0.9889);-webkit-text-stroke:0.25px #000;">01-01-2014</span>
<span class="t" style="left:1863.65px;top:598.50px;font-size:20.3px;line-height:25px;letter-spacing:-0.276px;transform:scaleX(1.0469);-webkit-text-stroke:0.25px #000;">N/A</span>
<span class="t" style="left:2073.65px;top:598.50px;font-size:20.3px;line-height:25px;letter-spacing:-0.276px;transform:scaleX(1.0469);-webkit-text-stroke:0.25px #000;">N/A</span>
<span class="t" style="left:2297.60px;top:598.50px;font-size:20.3px;line-height:25px;letter-spacing:-0.760px;transform:scaleX(1.0111);-webkit-text-stroke:0.25px #000;">Test</span>
<span class="t" style="left:41.71px;top:630.50px;font-size:20.3px;line-height:25px;letter-spacing:-0.073px;transform:scaleX(0.9922);-webkit-text-stroke:0.25px #000;">Emma's Community Group - Summer crafting fun at the Leisure Centre!</span>
<span class="t" style="left:1003.78px;top:630.50px;font-size:20.3px;line-height:25px;letter-spacing:0.454px;transform:scaleX(0.9889);-webkit-text-stroke:0.25px #000;">25-07-2025</span>
<span class="t" style="left:1202.09px;top:630.50px;font-size:20.3px;line-height:25px;letter-spacing:0.362px;transform:scaleX(0.7758);-webkit-text-stroke:0.25px #000;">PJ</span>
<span class="t" style="left:1441.69px;top:630.50px;font-size:20.3px;line-height:25px;letter-spacing:-0.313px;transform:scaleX(0.9604);-webkit-text-stroke:0.25px #000;">Doeseb</span>
<span class="t" style="left:1665.78px;top:630.50px;font-size:20.3px;line-height:25px;letter-spacing:0.504px;transform:scaleX(0.9889);-webkit-text-stroke:0.25px #000;">25-01-2018</span>
<span class="t" style="left:1863.62px;top:630.50px;font-size:20.3px;line-height:25px;letter-spacing:-0.494px;transform:scaleX(0.8717);-webkit-text-stroke:0.25px #000;">CSV DEMO TEST</span>
<span class="t" style="left:2073.65px;top:630.50px;font-size:20.3px;line-height:25px;letter-spacing:-0.276px;transform:scaleX(1.0469);-webkit-text-stroke:0.25px #000;">N/A</span>
<span class="t" style="left:2297.74px;top:630.50px;font-size:20.3px;line-height:25px;letter-spacing:-0.179px;transform:scaleX(0.9850);-webkit-text-stroke:0.25px #000;">Pejehafo</span>
<span class="t" style="left:41.71px;top:662.50px;font-size:20.3px;line-height:25px;letter-spacing:-0.073px;transform:scaleX(0.9922);-webkit-text-stroke:0.25px #000;">Emma's Community Group - Summer crafting fun at the Leisure Centre!</span>
<span class="t" style="left:1003.78px;top:662.50px;font-size:20.3px;line-height:25px;letter-spacing:0.454px;transform:scaleX(0.9889);-webkit-text-stroke:0.25px #000;">25-07-2025</span>
<span class="t" style="left:1201.77px;top:662.50px;font-size:20.3px;line-height:25px;letter-spacing:-0.173px;transform:scaleX(1.0102);-webkit-text-stroke:0.25px #000;">first name 1</span>
<span class="t" style="left:1442.03px;top:662.50px;font-size:20.3px;line-height:25px;letter-spacing:-0.241px;transform:scaleX(0.9842);-webkit-text-stroke:0.25px #000;">last name 1</span>
<span class="t" style="left:1665.78px;top:662.50px;font-size:20.3px;line-height:25px;letter-spacing:0.530px;transform:scaleX(0.9889);-webkit-text-stroke:0.25px #000;">25-01-2014</span>
<span class="t" style="left:1863.62px;top:662.50px;font-size:20.3px;line-height:25px;letter-spacing:-0.494px;transform:scaleX(0.8717);-webkit-text-stroke:0.25px #000;">CSV DEMO TEST</span>
<span class="t" style="left:2073.65px;top:662.50px;font-size:20.3px;line-height:25px;letter-spacing:-0.276px;transform:scaleX(1.0469);-webkit-text-stroke:0.25px #000;">N/A</span>
<span class="t" style="left:2297.85px;top:662.50px;font-size:20.3px;line-height:25px;letter-spacing:-0.196px;transform:scaleX(0.9925);-webkit-text-stroke:0.25px #000;">Annabel</span>
<span class="t" style="left:41.71px;top:694.50px;font-size:20.3px;line-height:25px;letter-spacing:-0.073px;transform:scaleX(0.9922);-webkit-text-stroke:0.25px #000;">Emma's Community Group - Summer crafting fun at the Leisure Centre!</span>
<span class="t" style="left:1003.78px;top:694.50px;font-size:20.3px;line-height:25px;letter-spacing:0.454px;transform:scaleX(0.9889);-webkit-text-stroke:0.25px #000;">25-07-2025</span>
<span class="t" style="left:1201.68px;top:694.50px;font-size:20.3px;line-height:25px;letter-spacing:-0.014px;transform:scaleX(0.9613);-webkit-text-stroke:0.25px #000;">Frank</span>
<span class="t" style="left:1441.84px;top:694.50px;font-size:20.3px;line-height:25px;letter-spacing:-0.102px;transform:scaleX(0.9215);-webkit-text-stroke:0.25px #000;">Rush</span>
<span class="t" style="left:1665.78px;top:694.50px;font-size:20.3px;line-height:25px;letter-spacing:0.530px;transform:scaleX(0.9889);-webkit-text-stroke:0.25px #000;">25-01-2014</span>
<span class="t" style="left:1863.62px;top:694.50px;font-size:20.3px;line-height:25px;letter-spacing:-0.494px;transform:scaleX(0.8717);-webkit-text-stroke:0.25px #000;">CSV DEMO TEST</span>
<span class="t" style="left:2073.65px;top:694.50px;font-size:20.3px;line-height:25px;letter-spacing:-0.276px;transform:scaleX(1.0469);-webkit-text-stroke:0.25px #000;">N/A</span>
<span class="t" style="left:2297.85px;top:694.50px;font-size:20.3px;line-height:25px;letter-spacing:-0.196px;transform:scaleX(0.9925);-webkit-text-stroke:0.25px #000;">Annabel</span>
<span class="t" style="left:41.71px;top:726.50px;font-size:20.3px;line-height:25px;letter-spacing:-0.073px;transform:scaleX(0.9922);-webkit-text-stroke:0.25px #000;">Emma's Community Group - Summer crafting fun at the Leisure Centre!</span>
<span class="t" style="left:1003.59px;top:726.50px;font-size:20.3px;line-height:25px;letter-spacing:0.476px;transform:scaleX(0.9889);-webkit-text-stroke:0.25px #000;">01-08-2025</span>
<span class="t" style="left:1201.69px;top:726.50px;font-size:20.3px;line-height:25px;letter-spacing:0.637px;transform:scaleX(0.9843);-webkit-text-stroke:0.25px #000;">chris</span>
<span class="t" style="left:1441.67px;top:726.50px;font-size:20.3px;line-height:25px;letter-spacing:0.205px;transform:scaleX(0.9753);-webkit-text-stroke:0.25px #000;">David</span>
<span class="t" style="left:1665.59px;top:726.50px;font-size:20.3px;line-height:25px;letter-spacing:0.549px;transform:scaleX(0.9889);-webkit-text-stroke:0.25px #000;">09-05-2019</span>
<span class="t" style="left:1863.67px;top:726.50px;font-size:20.3px;line-height:25px;letter-spacing:0.224px;transform:scaleX(0.9675);-webkit-text-stroke:0.25px #000;">Furlong School</span>
<span class="t" style="left:2073.62px;top:726.50px;font-size:20.3px;line-height:25px;letter-spacing:0.244px;transform:scaleX(0.8742);-webkit-text-stroke:0.25px #000;">CB8 7SG</span>
<span class="t" style="left:2297.68px;top:726.50px;font-size:20.3px;line-height:25px;letter-spacing:0.404px;transform:scaleX(0.9639);-webkit-text-stroke:0.25px #000;">Liam</span>
<span class="t" style="left:41.71px;top:758.50px;font-size:20.3px;line-height:25px;letter-spacing:-0.073px;transform:scaleX(0.9922);-webkit-text-stroke:0.25px #000;">Emma's Community Group - Summer crafting fun at the Leisure Centre!</span>
<span class="t" style="left:1003.59px;top:758.50px;font-size:20.3px;line-height:25px;letter-spacing:0.476px;transform:scaleX(0.9889);-webkit-text-stroke:0.25px #000;">01-08-2025</span>
<span class="t" style="left:1201.84px;top:758.50px;font-size:20.3px;line-height:25px;letter-spacing:0.226px;transform:scaleX(1.0537);-webkit-text-stroke:0.25px #000;">Morris</span>
<span class="t" style="left:1441.84px;top:758.50px;font-size:20.3px;line-height:25px;letter-spacing:0.308px;transform:scaleX(1.0176);-webkit-text-stroke:0.25px #000;">Watkins</span>
<span class="t" style="left:1665.78px;top:758.50px;font-size:20.3px;line-height:25px;letter-spacing:0.530px;transform:scaleX(0.9889);-webkit-text-stroke:0.25px #000;">25-01-2014</span>
<span class="t" style="left:1863.62px;top:758.50px;font-size:20.3px;line-height:25px;letter-spacing:-0.494px;transform:scaleX(0.8717);-webkit-text-stroke:0.25px #000;">CSV DEMO TEST</span>
<span class="t" style="left:2073.65px;top:758.50px;font-size:20.3px;line-height:25px;letter-spacing:-0.276px;transform:scaleX(1.0469);-webkit-text-stroke:0.25px #000;">N/A</span>
<span class="t" style="left:2297.76px;top:758.50px;font-size:20.3px;line-height:25px;letter-spacing:-0.416px;transform:scaleX(0.9622);-webkit-text-stroke:0.25px #000;">Emma</span>
<span class="t" style="left:41.71px;top:790.50px;font-size:20.3px;line-height:25px;letter-spacing:-0.073px;transform:scaleX(0.9922);-webkit-text-stroke:0.25px #000;">Emma's Community Group - Summer crafting fun at the Leisure Centre!</span>
<span class="t" style="left:1004.17px;top:790.50px;font-size:20.3px;line-height:25px;letter-spacing:0.410px;transform:scaleX(0.9889);-webkit-text-stroke:0.25px #000;">15-08-2025</span>
<span class="t" style="left:1201.55px;top:790.50px;font-size:20.3px;line-height:25px;letter-spacing:0.582px;transform:scaleX(0.9418);-webkit-text-stroke:0.25px #000;">Chris</span>
<span class="t" style="left:1441.47px;top:790.50px;font-size:20.3px;line-height:25px;letter-spacing:0.551px;transform:scaleX(0.9956);-webkit-text-stroke:0.25px #000;">Smith</span>
<span class="t" style="left:1665.78px;top:790.50px;font-size:20.3px;line-height:25px;letter-spacing:0.504px;transform:scaleX(0.9889);-webkit-text-stroke:0.25px #000;">27-01-2018</span>
<span class="t" style="left:1863.67px;top:790.50px;font-size:20.3px;line-height:25px;letter-spacing:0.224px;transform:scaleX(0.9675);-webkit-text-stroke:0.25px #000;">Furlong School</span>
<span class="t" style="left:2073.62px;top:790.50px;font-size:20.3px;line-height:25px;letter-spacing:0.244px;transform:scaleX(0.8742);-webkit-text-stroke:0.25px #000;">CB8 7SG</span>
<span class="t" style="left:2297.55px;top:790.50px;font-size:20.3px;line-height:25px;letter-spacing:0.582px;transform:scaleX(0.9418);-webkit-text-stroke:0.25px #000;">Chris</span>
<span class="t" style="left:41.71px;top:822.50px;font-size:20.3px;line-height:25px;letter-spacing:-0.073px;transform:scaleX(0.9922);-webkit-text-stroke:0.25px #000;">Emma's Community Group - Summer crafting fun at the Leisure Centre!</span>
<span class="t" style="left:1003.78px;top:822.50px;font-size:20.3px;line-height:25px;letter-spacing:0.454px;transform:scaleX(0.9889);-webkit-text-stroke:0.25px #000;">29-08-2025</span>
<span class="t" style="left:1201.55px;top:822.50px;font-size:20.3px;line-height:25px;letter-spacing:0.582px;transform:scaleX(0.9418);-webkit-text-stroke:0.25px #000;">Chris</span>
<span class="t" style="left:1441.47px;top:822.50px;font-size:20.3px;line-height:25px;letter-spacing:0.551px;transform:scaleX(0.9956);-webkit-text-stroke:0.25px #000;">Smith</span>
<span class="t" style="left:1665.78px;top:822.50px;font-size:20.3px;line-height:25px;letter-spacing:0.504px;transform:scaleX(0.9889);-webkit-text-stroke:0.25px #000;">27-01-2018</span>
<span class="t" style="left:1863.67px;top:822.50px;font-size:20.3px;line-height:25px;letter-spacing:0.224px;transform:scaleX(0.9675);-webkit-text-stroke:0.25px #000;">Furlong School</span>
<span class="t" style="left:2073.62px;top:822.50px;font-size:20.3px;line-height:25px;letter-spacing:0.244px;transform:scaleX(0.8742);-webkit-text-stroke:0.25px #000;">CB8 7SG</span>
<span class="t" style="left:2297.55px;top:822.50px;font-size:20.3px;line-height:25px;letter-spacing:0.582px;transform:scaleX(0.9418);-webkit-text-stroke:0.25px #000;">Chris</span>
</div></body></html>
